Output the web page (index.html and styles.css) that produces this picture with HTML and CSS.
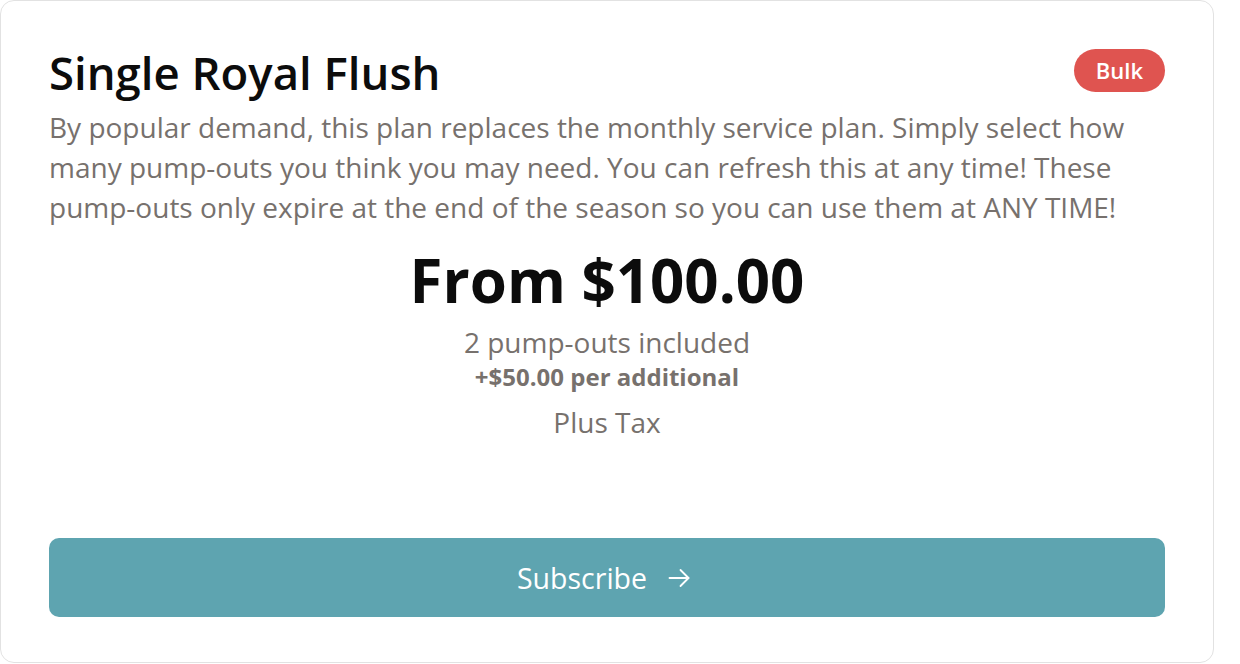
FILE: index.html
```html
<!DOCTYPE html>
<html lang="en">
<head>
<meta charset="utf-8">
<title>Single Royal Flush</title>
<link rel="stylesheet" href="styles.css">
</head>
<body>
<div class="card">
  <div class="card-head">
    <h2 class="title">Single Royal Flush</h2>
    <span class="badge">Bulk</span>
  </div>
  <p class="desc">By popular demand, this plan replaces the monthly service plan. Simply select how many pump-outs you think you may need. You can refresh this at any time! These pump-outs only expire at the end of the season so you can use them at ANY TIME!</p>
  <div class="pricing">
    <div class="price">From $100.00</div>
    <div class="included">2 pump-outs included</div>
    <div class="additional">+$50.00 per additional</div>
    <div class="tax">Plus Tax</div>
  </div>
  <button class="subscribe" type="button">Subscribe
    <svg class="arrow" width="24" height="24" viewBox="0 0 24 24" fill="none" stroke="currentColor" stroke-width="1.8" stroke-linecap="round" stroke-linejoin="round"><path d="M2.5 12h19"/><path d="M13.5 4l8 8-8 8"/></svg>
  </button>
</div>
</body>
</html>
```
FILE: styles.css
```css
* { box-sizing: border-box; }
html, body { margin: 0; padding: 0; background: #ffffff; }
body { font-family: "Open Sans", "Liberation Sans", sans-serif; }

.card {
  width: 1214px;
  height: 663px;
  border: 1px solid #e2e2e2;
  border-radius: 14px;
  background: #fff;
  padding: 41px 48px 45px 48px;
  display: flex;
  flex-direction: column;
}

.card-head {
  display: flex;
  justify-content: space-between;
  align-items: flex-start;
}

.title {
  margin: 0;
  font-size: 45.5px;
  font-weight: 600;
  line-height: 60px;
  color: #0c0c0c;
}

.badge {
  margin-top: 7px;
  background: #df5450;
  color: #fff;
  font-size: 22px;
  font-weight: 600;
  height: 43px;
  line-height: 43px;
  padding: 0 22px;
  border-radius: 22px;
}

.desc {
  margin: 5px 0 0;
  font-size: 28px;
  line-height: 40px;
  color: #77716d;
}

.pricing {
  margin-top: 15px;
  text-align: center;
}

.price {
  font-size: 60px;
  font-weight: 700;
  line-height: 76px;
  color: #0c0c0c;
}

.included {
  margin-top: 6px;
  font-size: 28px;
  line-height: 36px;
  color: #77716d;
}

.additional {
  margin-top: 2px;
  font-size: 24px;
  font-weight: 700;
  line-height: 30px;
  color: #77716d;
}

.tax {
  margin-top: 12px;
  font-size: 28px;
  line-height: 36px;
  color: #77716d;
}

.subscribe {
  margin-top: auto;
  width: 100%;
  height: 79px;
  border: 0;
  border-radius: 10px;
  background: #5ea4b0;
  color: #fff;
  font-family: inherit;
  font-size: 28.5px;
  font-weight: 500;
  display: flex;
  align-items: center;
  justify-content: center;
  gap: 20px;
  padding: 0 6px 0 0;
}

.arrow { display: block; }
```
